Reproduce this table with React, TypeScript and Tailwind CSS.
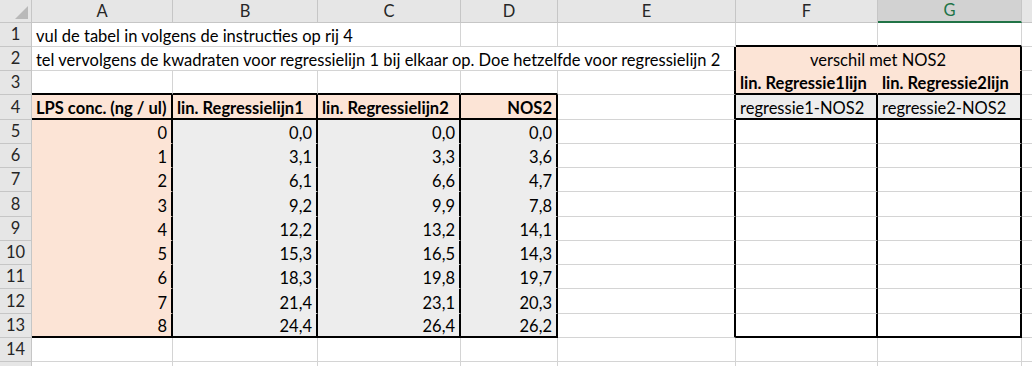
import clsx from 'clsx';

type Edge = 'grid' | 'thick' | 'none';

type CellProps = {
  text?: string;
  span?: number;
  fill?: 'peach' | 'gray';
  align?: 'l' | 'r' | 'c';
  bold?: boolean;
  r?: Edge;
  b?: Edge;
};

const COLS = 'grid grid-cols-[32px_141px_145px_143px_97px_178px_142px_144px_60px]';
const LETTERS = ['A', 'B', 'C', 'D', 'E', 'F', 'G', 'H'];

const rightEdge: Record<Edge, string> = {
  grid: 'border-r border-r-[#d4d4d4]',
  thick: 'border-r-2 border-r-black',
  none: 'border-r border-r-transparent',
};

const bottomEdge: Record<Edge, string> = {
  grid: 'border-b border-b-[#d4d4d4]',
  thick: 'border-b-2 border-b-black',
  none: 'border-b border-b-transparent',
};

const spans: Record<number, string> = {
  1: 'col-span-1',
  2: 'col-span-2',
  3: 'col-span-3',
  5: 'col-span-5',
};

// rows 4, 8 and 12 come out one pixel taller at this zoom level
const tallRows = [4, 8, 12];

const Cell = ({ text, span = 1, fill, align = 'l', bold, r = 'grid', b = 'grid' }: CellProps) => (
  <div
    className={clsx(
      'flex items-end pb-[2px] px-[4px] whitespace-nowrap overflow-hidden text-black',
      spans[span],
      rightEdge[r],
      bottomEdge[b],
      fill === 'peach' && 'bg-[#fce4d6]',
      fill === 'gray' && 'bg-[#ededed]',
      align === 'r' && 'justify-end',
      align === 'c' && 'justify-center',
      bold && 'font-bold',
    )}
  >
    {text}
  </div>
);

const RowHead = ({ n }: { n: number }) => (
  <div className="flex items-center justify-center bg-[#e6e6e6] border-r border-b border-[#c6c6c6] text-[#262626]">
    {n < 15 ? n : ''}
  </div>
);

const lps = [0, 1, 2, 3, 4, 5, 6, 7, 8];
const lin1 = ['0,0', '3,1', '6,1', '9,2', '12,2', '15,3', '18,3', '21,4', '24,4'];
const lin2 = ['0,0', '3,3', '6,6', '9,9', '13,2', '16,5', '19,8', '23,1', '26,4'];
const nos2 = ['0,0', '3,6', '4,7', '7,8', '14,1', '14,3', '19,7', '20,3', '26,2'];

const rows: CellProps[][] = [
  [
    { text: 'vul de tabel in volgens de instructies op rij 4', span: 3 },
    {},
    {},
    { b: 'thick' },
    { b: 'thick' },
    {},
  ],
  [
    {
      text: 'tel vervolgens de kwadraten voor regressielijn 1 bij elkaar op. Doe hetzelfde voor regressielijn 2',
      span: 5,
      r: 'thick',
    },
    { text: 'verschil met NOS2', span: 2, fill: 'peach', align: 'c', r: 'thick', b: 'none' },
    {},
  ],
  [
    { b: 'thick' },
    { b: 'thick' },
    { b: 'thick' },
    { b: 'thick' },
    { r: 'thick' },
    { text: 'lin. Regressie1lijn', fill: 'peach', bold: true, r: 'none', b: 'thick' },
    { text: 'lin. Regressie2lijn', fill: 'peach', bold: true, r: 'thick', b: 'thick' },
    {},
  ],
  [
    { text: 'LPS conc. (ng / ul)', fill: 'peach', bold: true, r: 'thick', b: 'thick' },
    { text: 'lin. Regressielijn1', fill: 'peach', bold: true, r: 'thick', b: 'thick' },
    { text: 'lin. Regressielijn2', fill: 'peach', bold: true, r: 'thick', b: 'thick' },
    { text: 'NOS2', fill: 'peach', bold: true, align: 'r', r: 'thick', b: 'thick' },
    { r: 'thick' },
    { text: 'regressie1-NOS2', fill: 'gray', r: 'thick', b: 'thick' },
    { text: 'regressie2-NOS2', fill: 'gray', r: 'thick', b: 'thick' },
    {},
  ],
  ...lps.map((v, i): CellProps[] => {
    const last = i === lps.length - 1;
    const b: Edge = last ? 'thick' : 'none';
    return [
      { text: String(v), fill: 'peach', align: 'r', r: 'thick', b },
      { text: lin1[i], fill: 'gray', align: 'r', r: 'thick', b },
      { text: lin2[i], fill: 'gray', align: 'r', r: 'thick', b },
      { text: nos2[i], fill: 'gray', align: 'r', r: 'thick', b },
      { r: 'thick' },
      { r: 'thick', b: last ? 'thick' : 'grid' },
      { r: 'thick', b: last ? 'thick' : 'grid' },
      {},
    ];
  }),
  [{}, {}, {}, {}, {}, {}, {}, {}],
  [{}, {}, {}, {}, {}, {}, {}, {}],
];

export default function App() {
  return (
    <div className="w-[1032px] h-[366px] overflow-hidden bg-white font-['Lato','Open_Sans',sans-serif] text-[16.5px] leading-none">
      {/* column letters */}
      <div className={clsx(COLS, 'h-[23px]')}>
        <div className="relative bg-[#e6e6e6] border-r border-b border-[#c6c6c6]">
          <svg className="absolute left-[15px] top-[6px]" width="14" height="14" viewBox="0 0 14 14">
            <polygon points="0,13 13,0 13,13" fill="#b9b9b9" />
          </svg>
        </div>
        {LETTERS.map((l) =>
          l === 'G' ? (
            <div
              key={l}
              className="flex items-center justify-center bg-[#d2d2d2] border-r border-r-[#c6c6c6] border-b-2 border-b-[#217346] text-[#217346]"
            >
              {l}
            </div>
          ) : (
            <div
              key={l}
              className="flex items-center justify-center bg-[#e6e6e6] border-r border-b border-[#c6c6c6] text-[#262626]"
            >
              {l === 'H' ? '' : l}
            </div>
          ),
        )}
      </div>

      {rows.map((cells, i) => (
        <div key={i} className={clsx(COLS, tallRows.includes(i + 1) ? 'h-[25px]' : 'h-[24px]')}>
          <RowHead n={i + 1} />
          {cells.map((c, j) => (
            <Cell key={j} {...c} />
          ))}
        </div>
      ))}
    </div>
  );
}
